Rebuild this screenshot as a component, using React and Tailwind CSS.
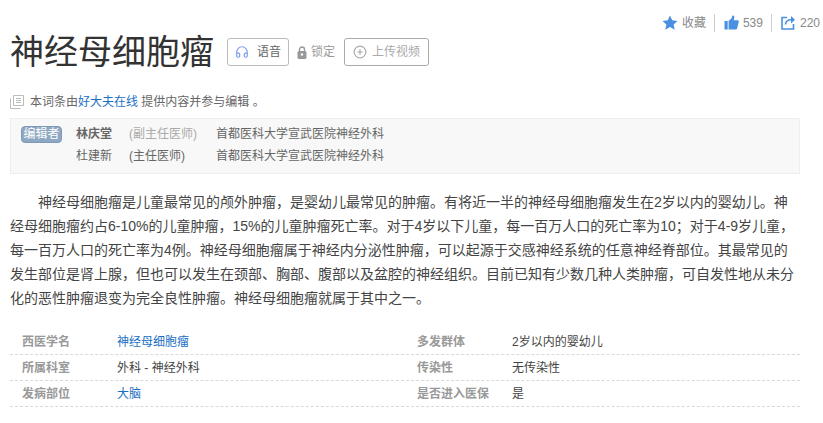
import React from 'react';
import { Headphones, CirclePlus } from 'lucide-react';

const INFO_ROWS = [
  { leftLabel: '西医学名', left: '神经母细胞瘤', leftLink: true, rightLabel: '多发群体', right: '2岁以内的婴幼儿' },
  { leftLabel: '所属科室', left: '外科 - 神经外科', rightLabel: '传染性', right: '无传染性' },
  { leftLabel: '发病部位', left: '大脑', leftLink: true, rightLabel: '是否进入医保', right: '是' },
];

const EDITORS = [
  { name: '林庆堂', bold: true, title: '(副主任医师)', titleClass: 'text-[#aaaaaa]', org: '首都医科大学宣武医院神经外科' },
  { name: '杜建新', title: '(主任医师)', titleClass: 'text-[#666666]', org: '首都医科大学宣武医院神经外科' },
];

const StatBar = () => (
  <div className="flex items-center justify-end h-[15px] text-xs text-[#888888] -mr-[20px]">
    <svg width="16" height="15" viewBox="0 0 16 15" className="mr-[4px]">
      <path d="M8 0.5l2.2 4.8 5.3.6-3.9 3.6 1.1 5.2L8 12.1l-4.7 2.6 1.1-5.2L.5 5.9l5.3-.6z" fill="#4a90e2" />
    </svg>
    <span>收藏</span>
    <span className="w-px h-[18px] bg-[#cccccc] ml-2 mr-[7px]" />
    <svg width="15" height="15" viewBox="0 0 15 15" className="mx-[2px] mr-[4px]">
      <rect x="0.5" y="6" width="3.2" height="8.5" fill="#4a90e2" />
      <path d="M4.6 6l3-2.7L8.4.6c1.6-.4 2.3 1 1.8 2.6L9.7 5.2h3.9c1.1 0 1.4.9 1.1 1.8l-1.6 6.4c-.2.7-.7 1.1-1.4 1.1H4.6z" fill="#4a90e2" />
    </svg>
    <span>539</span>
    <span className="w-px h-[18px] bg-[#cccccc] ml-2 mr-[7px]" />
    <svg width="15" height="15" viewBox="0 0 15 15" fill="none" stroke="#4a90e2" strokeWidth="1.6" className="mx-[2px] mr-[4px]">
      <path d="M6 2.5H1v11.500h11.500V9" />
      <path d="M4.500 9.500c.3-3.200 2.500-4.800 5.500-4.800" />
      <path d="M10 1l4 3.700-4 3.700z" fill="#4a90e2" stroke="none" />
    </svg>
    <span>220</span>
  </div>
);

const Editors = () => (
  <div className="mt-[7px] bg-[#f8f8f8] border border-[#eeeeee] h-[56px] pl-[10px] pt-[4px] flex items-start text-xs text-[#666666]">
    <span className="mt-[3px] w-[41px] h-[17px] rounded-sm bg-[#8ea7c2] border border-[#7f9ab8] text-white text-xs leading-[15px] text-center shrink-0">编辑者</span>
    <div className="ml-[14px] flex flex-col">
      {EDITORS.map((e) => (
        <div key={e.name} className="flex items-center h-[22px] leading-[20px]">
          <span className={`w-[53px] ${e.bold ? 'font-bold' : ''}`}>{e.name}</span>
          <span className={`w-[87px] ${e.titleClass}`}>{e.title}</span>
          <span>{e.org}</span>
        </div>
      ))}
    </div>
  </div>
);

const InfoTable = () => (
  <div className="mt-[19px] text-xs">
    {INFO_ROWS.map((r) => (
      <div key={r.leftLabel} className="flex h-[26px] items-center border-b border-dashed border-[#d9d9d9]">
        <span className="w-[107px] pl-[12px] font-bold text-[#999999]">{r.leftLabel}</span>
        <span className={`w-[288px] ${r.leftLink ? 'text-[#1a6fc4]' : 'text-[#444444]'}`}>{r.left}</span>
        <span className="w-[107px] pl-[12px] font-bold text-[#999999]">{r.rightLabel}</span>
        <span className="text-[#444444]">{r.right}</span>
      </div>
    ))}
  </div>
);

export default function App() {
  return (
    <div className="w-[823px] h-[423px] overflow-hidden bg-white pl-[10px] pr-[23px] pt-[15px] font-['Liberation_Sans','Noto_Sans_CJK_SC',sans-serif]">
      <StatBar />

      {/* Title row */}
      <div className="flex items-center -mt-[1px] h-[46px]">
        <h1 className="text-[34px] leading-[46px] text-[#333333] font-normal">神经母细胞瘤</h1>
        <button className="ml-[13px] w-[62px] h-[28px] border border-[#bbbbbb] rounded-[3px] flex items-center justify-center text-xs text-[#666666]">
          <Headphones size={14} className="text-[#7b9be8] mr-[8px]" />
          语音
        </button>
        <span className="ml-[8px] flex items-center text-xs text-[#999999]">
          <svg width="10" height="13" viewBox="0 0 10 13" className="mr-[4px]">
            <path d="M2.500 5.500V3.500a2.500 2.500 0 0 1 5 0v2" fill="none" stroke="#999999" strokeWidth="1.400" />
            <rect x="0.500" y="5" width="9" height="8" rx="1.500" fill="#999999" />
            <circle cx="5" cy="8.500" r="1.200" fill="#ffffff" />
          </svg>
          锁定
        </span>
        <button className="ml-[9px] w-[85px] h-[28px] border border-[#aaaaaa] rounded-[3px] flex items-center justify-center text-xs text-[#aaaaaa]">
          <CirclePlus size={14} className="mr-[5px]" />
          上传视频
        </button>
      </div>

      {/* Source line */}
      <div className="flex items-center mt-[18px] h-[18px] text-xs text-[#666666]">
        <svg width="14" height="14" viewBox="0 0 14 14" fill="none" stroke="#bbbbbb" className="mr-[6px]">
          <path d="M3.500.500h10v10h-10zM.500 3.500v10h10" />
          <path d="M6 3.500h5M6 5.500h5M6 7.500h5" />
        </svg>
        本词条由<span className="text-[#1a6fc4]">好大夫在线</span>&nbsp;提供内容并参与编辑&nbsp;。
      </div>

      <Editors />

      <p className="mt-[16px] text-[14px] leading-[24px] text-[#444444] indent-[28px] break-all">
        神经母细胞瘤是儿童最常见的颅外肿瘤，是婴幼儿最常见的肿瘤。有将近一半的神经母细胞瘤发生在2岁以内的婴幼儿。神经母细胞瘤约占6-10%的儿童肿瘤，15%的儿童肿瘤死亡率。对于4岁以下儿童，每一百万人口的死亡率为10；对于4-9岁儿童，每一百万人口的死亡率为4例。神经母细胞瘤属于神经内分泌性肿瘤，可以起源于交感神经系统的任意神经脊部位。其最常见的发生部位是肾上腺，但也可以发生在颈部、胸部、腹部以及盆腔的神经组织。目前已知有少数几种人类肿瘤，可自发性地从未分化的恶性肿瘤退变为完全良性肿瘤。神经母细胞瘤就属于其中之一。
      </p>

      <InfoTable />
    </div>
  );
}
